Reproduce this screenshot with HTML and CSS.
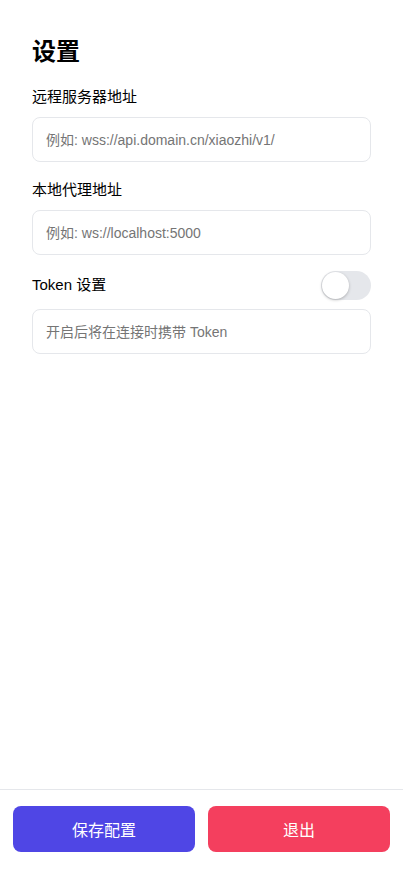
FILE: index.html
```html
<!DOCTYPE html>
<html lang="zh-CN">
<head>
<meta charset="utf-8">
<title>设置</title>
<link rel="stylesheet" href="styles.css">
</head>
<body>
<div class="page">
  <main class="content">
    <h1 class="title">设置</h1>
    <div class="field">
      <label class="label">远程服务器地址</label>
      <input class="input" type="text" placeholder="例如: wss://api.domain.cn/xiaozhi/v1/">
    </div>
    <div class="field">
      <label class="label">本地代理地址</label>
      <input class="input" type="text" placeholder="例如: ws://localhost:5000">
    </div>
    <div class="field">
      <div class="row">
        <span class="label">Token 设置</span>
        <span class="switch"><span class="knob"></span></span>
      </div>
      <input class="input" type="text" placeholder="开启后将在连接时携带 Token">
    </div>
  </main>
  <footer class="footer">
    <button class="btn btn-save">保存配置</button>
    <button class="btn btn-exit">退出</button>
  </footer>
</div>
</body>
</html>
```
FILE: styles.css
```css
* { box-sizing: border-box; }
html, body { margin: 0; padding: 0; background: #fff; }
body {
  font-family: "Liberation Sans", Arial, "Noto Sans CJK SC", sans-serif;
  color: #111;
}
.page {
  min-height: 100vh;
  display: flex;
  flex-direction: column;
}
.content {
  flex: 1;
  padding: 36px 32px 0 32px;
  display: flex;
  flex-direction: column;
  gap: 18px;
}
.title {
  margin: 0 0 1px 0;
  font-size: 24px;
  line-height: 32px;
  font-weight: 700;
  color: #000;
}
.field {
  display: flex;
  flex-direction: column;
}
.label {
  font-size: 15px;
  line-height: 20px;
  color: #000;
  margin-bottom: 10px;
}
.row {
  display: flex;
  justify-content: space-between;
  align-items: center;
  height: 30px;
  margin-top: -3px;
  margin-bottom: 9px;
}
.row .label { margin-bottom: 0; }
.input {
  width: 100%;
  height: 45px;
  border: 1px solid #e5e7eb;
  border-radius: 8px;
  padding: 0 13px;
  font-family: "Liberation Sans", Arial, "Noto Sans CJK SC", sans-serif;
  font-size: 14px;
  color: #111;
  outline: none;
  background: #fff;
}
.input::placeholder { color: #757575; }
.switch {
  width: 50px;
  height: 29px;
  border-radius: 15px;
  background: #e5e7eb;
  position: relative;
  display: inline-block;
}
.knob {
  position: absolute;
  left: 1px;
  top: 1px;
  width: 27px;
  height: 27px;
  border-radius: 50%;
  background: #fff;
  box-shadow: 0 1px 3px rgba(0,0,0,0.25);
}
.footer {
  border-top: 1px solid #e5e7eb;
  padding: 16px 13px 17px 13px;
  display: flex;
  gap: 13px;
}
.btn {
  flex: 1;
  height: 46px;
  border: none;
  border-radius: 8px;
  color: #fff;
  font-size: 16px;
  font-family: "Liberation Sans", Arial, "Noto Sans CJK SC", sans-serif;
}
.btn-save { background: #4f46e5; }
.btn-exit { background: #f43f5e; }
```
